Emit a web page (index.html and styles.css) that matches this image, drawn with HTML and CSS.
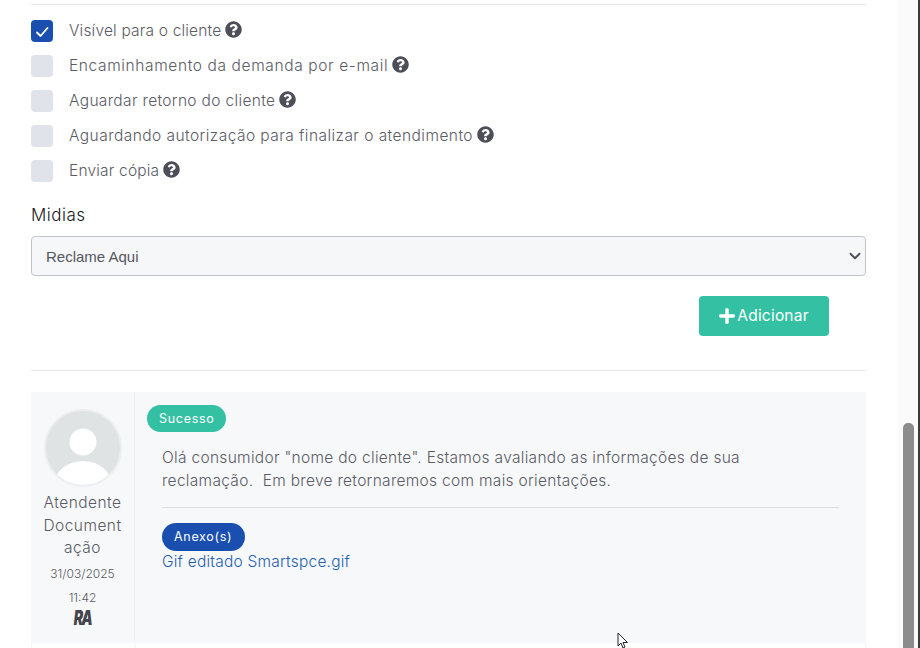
FILE: index.html
```html
<!DOCTYPE html>
<html>
  <head>
    <meta charset="utf-8">
    <meta name="viewport" content="width=device-width,initial-scale=1.0"/>
    <title>Atendimento</title>
    <link rel="stylesheet" href="styles.css">
  </head>

  <body>
    <svg class='defs' width='0' height='0'>
      <symbol id='icon-help' viewBox='0 0 512 512'>
        <path d='M504 256c0 136.997-111.043 248-248 248S8 392.997 8 256C8 119.083 119.043 8 256 8s248 111.083 248 248zM262.655 90c-54.497 0-89.255 22.957-116.549 63.758-3.536 5.286-2.353 12.415 2.715 16.258l34.699 26.31c5.205 3.947 12.621 3.008 16.665-2.122 17.864-22.658 30.113-35.797 57.303-35.797 20.429 0 45.698 13.148 45.698 32.958 0 14.976-12.363 22.667-32.534 33.976C247.128 238.528 216 254.941 216 296v4c0 6.627 5.373 12 12 12h56c6.627 0 12-5.373 12-12v-1.333c0-28.462 83.186-29.647 83.186-106.667 0-58.002-60.165-102-116.531-102zM256 338c-25.365 0-46 20.635-46 46 0 25.364 20.635 46 46 46s46-20.636 46-46c0-25.365-20.635-46-46-46z'/>
      </symbol>
    </svg>

    <div id='page'>
      <div id='main'>
        <hr class='rule rule-top'/>

        <!-- Options -->
        <div class='options'>
          <div class='option'>
            <span class='check check-on'>
              <svg viewBox='0 0 22 22' width='22' height='22'><path d='M6 12.500l3.500 3.500 7-8' fill='none' stroke='white' stroke-width='1.800' stroke-linecap='round' stroke-linejoin='round'/></svg>
            </span>
            <span class='option-text text-tight'>Visível para o cliente</span>
            <svg class='help'><use href='#icon-help'/></svg>
          </div>
          <div class='option'>
            <span class='check'></span>
            <span class='option-text text-wide'>Encaminhamento da demanda por e-mail</span>
            <svg class='help'><use href='#icon-help'/></svg>
          </div>
          <div class='option'>
            <span class='check'></span>
            <span class='option-text text-mid'>Aguardar retorno do cliente</span>
            <svg class='help'><use href='#icon-help'/></svg>
          </div>
          <div class='option'>
            <span class='check'></span>
            <span class='option-text'>Aguardando autorização para finalizar o atendimento</span>
            <svg class='help'><use href='#icon-help'/></svg>
          </div>
          <div class='option'>
            <span class='check'></span>
            <span class='option-text text-tight'>Enviar cópia</span>
            <svg class='help'><use href='#icon-help'/></svg>
          </div>
        </div>

        <!-- Midias -->
        <label class='field-label' for='midias'>Midias</label>
        <select class='field-select' id='midias'>
          <option>Reclame Aqui</option>
        </select>

        <div class='actions'>
          <button class='btn-add'>
            <svg viewBox='0 0 448 512' width='16' height='18'><path fill='white' d='M416 208H272V64c0-17.670-14.330-32-32-32h-32c-17.670 0-32 14.330-32 32v144H32c-17.670 0-32 14.330-32 32v32c0 17.670 14.330 32 32 32h144v144c0 17.670 14.330 32 32 32h32c17.670 0 32-14.330 32-32V304h144c17.670 0 32-14.330 32-32v-32c0-17.670-14.330-32-32-32z'/></svg>
            <span class='btn-add-text'>Adicionar</span>
          </button>
        </div>

        <hr class='rule rule-list'/>

        <!-- Messages -->
        <div class='message'>
          <div class='author'>
            <svg class='avatar' viewBox='0 0 78 78' width='78' height='78'>
              <clipPath id='avatar-clip'><circle cx='39' cy='39' r='37'/></clipPath>
              <circle cx='39' cy='39' r='38' fill='#dfe3e4' stroke='#eceeef' stroke-width='2'/>
              <circle cx='39' cy='33' r='13.500' fill='white'/>
              <ellipse cx='39' cy='74' rx='28' ry='22' fill='white' clip-path='url(#avatar-clip)'/>
            </svg>
            <div class='author-name'>Atendente<br/>Document<br/>ação</div>
            <div class='author-date'>31/03/2025</div>
            <div class='author-time'>11:42</div>
            <div class='author-logo'>RA</div>
          </div>
          <div class='body'>
            <span class='badge badge-success'>Sucesso</span>
            <div class='body-inner'>
              <p class='body-text'>Olá consumidor "nome do cliente". Estamos avaliando as informações de sua reclamação.&nbsp; Em breve retornaremos com mais orientações.</p>
              <hr class='rule rule-body'/>
              <span class='badge badge-files'>Anexo(s)</span>
              <a class='file-link'>Gif editado Smartspce.gif</a>
            </div>
          </div>
        </div>
        <div class='message-next'>
          <div class='author-next'></div>
        </div>
      </div>

      <div id='scroll'>
        <div class='scroll-thumb'></div>
      </div>
    </div>

    <svg class='cursor' viewBox='0 0 13 18' width='13' height='18'>
      <path d='M1 1v13l3-3 2 5 2-1-2-4.500h4.500z' fill='white' stroke='#23242a' stroke-width='1'/>
    </svg>
  </body>
</html>
```

FILE: styles.css
```css
* {
  box-sizing: border-box;
  margin: 0;
  padding: 0;
  font-family: Inter, 'Open Sans', sans-serif;
  font-weight: 300;
  color: #5a5b64;
}
html, body {
  height: 648px;
  overflow: hidden;
  background-color: white;
}
.defs {
  display: block;
  height: 0;
}
#page {
  display: flex;
  height: 648px;
}
#main {
  width: 898px;
  padding: 4px 32px 0 31px;
}
#scroll {
  width: 22px;
  padding: 423px 4px 0 5px;
  background-color: #fafafa;
  border-right: 2px solid #3a3a3a;
}
.scroll-thumb {
  height: 240px;
  background-color: #8c8c8c;
  border-radius: 5px 5px 0 0;
}
.rule {
  border: 0;
  border-top: 1px solid #e6e7ea;
}

.options {
  display: flex;
  flex-direction: column;
  gap: 13px;
  padding-top: 15px;
}
.option {
  display: flex;
  align-items: center;
  height: 22px;
}
.check {
  flex: none;
  width: 22px;
  height: 22px;
  margin-right: 16px;
  background-color: #e0e3ea;
  border-radius: 4px;
}
.check-on {
  background-color: #1a4fb0;
}
.check svg {
  display: block;
}
.option-text {
  margin-top: -2px;
  font-size: 15.500px;
  letter-spacing: 0.450px;
  white-space: nowrap;
}
.text-tight {
  letter-spacing: 0.180px;
}
.text-mid {
  letter-spacing: 0.340px;
}
.text-wide {
  letter-spacing: 0.620px;
}
.help {
  width: 17px;
  height: 17px;
  margin: -4px 0 0 4px;
  fill: #4d4e57;
}

.field-label {
  display: block;
  margin-top: 21px;
  font-size: 17px;
  line-height: 24px;
  letter-spacing: 0.500px;
  color: #16171c;
}
.field-select {
  display: block;
  width: 100%;
  height: 40px;
  margin-top: 9px;
  padding: 1px 0 0 14px;
  font-family: 'Liberation Sans', sans-serif;
  font-size: 15px;
  font-weight: 400;
  color: #55565e;
  background-color: #f6f7f9;
  background-image: url("data:image/svg+xml,%3csvg xmlns='http://www.w3.org/2000/svg' viewBox='0 0 16 16'%3e%3cpath fill='none' stroke='%234d4e57' stroke-linecap='round' stroke-linejoin='round' stroke-width='2.500' d='M2 5l6 6 6-6'/%3e%3c/svg%3e");
  background-repeat: no-repeat;
  background-position: right 3px center;
  background-size: 14px 12px;
  border: 1px solid #c3c4c9;
  border-radius: 4px;
  appearance: none;
}
.actions {
  display: flex;
  justify-content: flex-end;
  padding: 20px 37px 34px 0;
}
.btn-add {
  display: flex;
  align-items: center;
  justify-content: center;
  gap: 2px;
  width: 130px;
  height: 40px;
  background-color: #34c1a3;
  border: 0;
  border-radius: 4px;
}
.btn-add-text {
  margin-top: -2px;
  font-size: 15.500px;
  font-weight: 400;
  letter-spacing: 0.200px;
  color: white;
}
.rule-list {
  margin-bottom: 21px;
}

.message {
  display: flex;
  height: 251px;
  background-color: #f7f8fa;
}
.author {
  flex: none;
  width: 104px;
  padding-top: 17px;
  text-align: center;
  border-right: 1px solid #f0f1f4;
}
.avatar {
  display: block;
  margin: 0 auto;
}
.author-name {
  margin-top: 5px;
  font-size: 15.500px;
  line-height: 22.500px;
  letter-spacing: 0.450px;
}
.author-date {
  margin-top: 5px;
  font-size: 12px;
  line-height: 18px;
}
.author-time {
  margin-top: 6px;
  font-size: 12px;
  line-height: 18px;
}
.author-logo {
  height: 18px;
  margin-top: 2px;
  font-size: 20px;
  line-height: 18px;
  font-weight: 900;
  font-style: italic;
  letter-spacing: -2px;
  color: #44454c;
  transform: scaleX(0.700);
}
.body {
  flex: 1;
  padding: 13px 27px 0 12px;
}
.body-inner {
  padding-left: 15px;
}
.badge {
  display: inline-block;
  height: 27px;
  padding: 0 12px;
  font-size: 12.500px;
  font-weight: 400;
  line-height: 27px;
  letter-spacing: 0.700px;
  color: white;
  border-radius: 14px;
}
.badge-success {
  background-color: #34c1a3;
}
.badge-files {
  display: block;
  width: 83px;
  height: 28px;
  line-height: 28px;
  background-color: #1a4fb0;
}
.body-text {
  max-width: 620px;
  margin-top: 14px;
  font-size: 15.500px;
  line-height: 23px;
  letter-spacing: 0.300px;
}
.rule-body {
  margin: 15px 0;
  border-top-color: #dcdde1;
}
.file-link {
  display: block;
  font-size: 15.500px;
  line-height: 21px;
  letter-spacing: 0.220px;
  color: #1f5fb2;
}
.message-next {
  height: 10px;
  border-left: 1px solid #f3f4f6;
  border-right: 1px solid #f3f4f6;
}
.author-next {
  width: 104px;
  height: 10px;
  border-right: 1px solid #f3f4f6;
}
.cursor {
  position: absolute;
  left: 617px;
  top: 632px;
}
```
